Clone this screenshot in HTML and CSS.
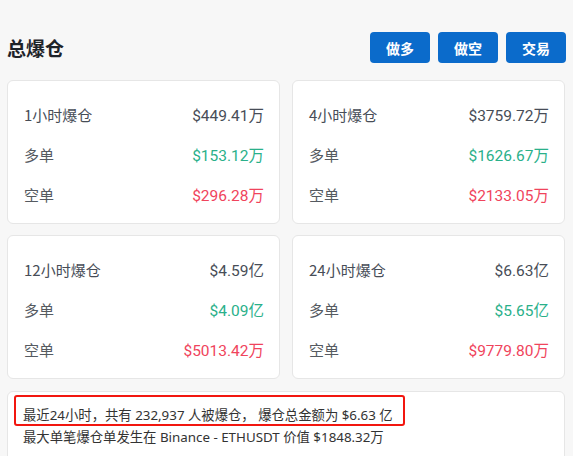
FILE: index.html
```html
<!DOCTYPE html>
<html lang="zh-CN">
<head>
<meta charset="utf-8">
<title>总爆仓</title>
<link rel="stylesheet" href="styles.css">
</head>
<body>
<div class="page">
  <header class="header">
    <h1 class="title">总爆仓</h1>
    <div class="actions">
      <button class="btn">做多</button>
      <button class="btn">做空</button>
      <button class="btn">交易</button>
    </div>
  </header>

  <section class="grid">
    <div class="card">
      <div class="row"><span class="label strong">1小时爆仓</span><span class="value">$449.41万</span></div>
      <div class="row"><span class="label">多单</span><span class="value up">$153.12万</span></div>
      <div class="row"><span class="label">空单</span><span class="value down">$296.28万</span></div>
    </div>
    <div class="card">
      <div class="row"><span class="label strong">4小时爆仓</span><span class="value">$3759.72万</span></div>
      <div class="row"><span class="label">多单</span><span class="value up">$1626.67万</span></div>
      <div class="row"><span class="label">空单</span><span class="value down">$2133.05万</span></div>
    </div>
    <div class="card">
      <div class="row"><span class="label strong">12小时爆仓</span><span class="value">$4.59亿</span></div>
      <div class="row"><span class="label">多单</span><span class="value up">$4.09亿</span></div>
      <div class="row"><span class="label">空单</span><span class="value down">$5013.42万</span></div>
    </div>
    <div class="card">
      <div class="row"><span class="label strong">24小时爆仓</span><span class="value">$6.63亿</span></div>
      <div class="row"><span class="label">多单</span><span class="value up">$5.65亿</span></div>
      <div class="row"><span class="label">空单</span><span class="value down">$9779.80万</span></div>
    </div>
  </section>

  <section class="summary">
    <div class="mark"></div>
    <p class="line">最近24小时，共有 232,937 人被爆仓， 爆仓总金额为 $6.63 亿</p>
    <p class="line">最大单笔爆仓单发生在 Binance - ETHUSDT 价值 $1848.32万</p>
  </section>
</div>
</body>
</html>
```

FILE: styles.css
```css
html, body {
  margin: 0;
  padding: 0;
  background: #f7f7f7;
  height: 100%;
  overflow: hidden;
}

body {
  font-family: "Noto Sans", "Noto Sans CJK SC", sans-serif;
  color: #1e2329;
}

.page {
  padding: 32px 8px 0 7px;
}

.header {
  display: flex;
  align-items: center;
  justify-content: space-between;
  height: 31px;
  margin-bottom: 17px;
}

.title {
  margin: 0;
  font-size: 19px;
  font-weight: 700;
  color: #1e2329;
}

.actions {
  display: flex;
  gap: 8px;
  margin-right: -1px;
}

.btn {
  width: 60px;
  height: 31px;
  border: 0;
  border-radius: 4px;
  background: #0b6bcb;
  color: #fff;
  font-family: "Noto Sans CJK SC", sans-serif;
  font-size: 14px;
  font-weight: 700;
  padding: 0;
}

.grid {
  display: grid;
  grid-template-columns: 1fr 1fr;
  column-gap: 12px;
  row-gap: 11px;
}

.card {
  background: #fff;
  border: 1px solid #e6e6e6;
  border-radius: 6px;
  box-sizing: border-box;
  height: 144px;
  padding: 13px 15px 0 16px;
}

.row {
  display: flex;
  justify-content: space-between;
  align-items: center;
  height: 40px;
}

.label {
  font-family: "Noto Sans CJK SC", sans-serif;
  font-size: 15px;
  color: #555a61;
}

.label.strong {
  color: #474d57;
}

.value {
  font-family: "Roboto", "Noto Sans CJK SC", sans-serif;
  font-size: 15.5px;
  color: #474d57;
}

.value.up { color: #2ab08a; }
.value.down { color: #f0445c; }

.summary {
  position: relative;
  margin-top: 12px;
  background: #fff;
  border: 1px solid #e6e6e6;
  border-radius: 6px;
  padding: 12px 15px 20px 15px;
}

.line {
  margin: 0;
  font-family: "Noto Sans", "Noto Sans CJK SC", sans-serif;
  font-size: 13.35px;
  line-height: 22px;
  color: #333;
}

.mark {
  position: absolute;
  left: 6px;
  top: 3px;
  width: 387px;
  height: 27px;
  border: 2px solid #f2160f;
  border-radius: 3px;
}
```
